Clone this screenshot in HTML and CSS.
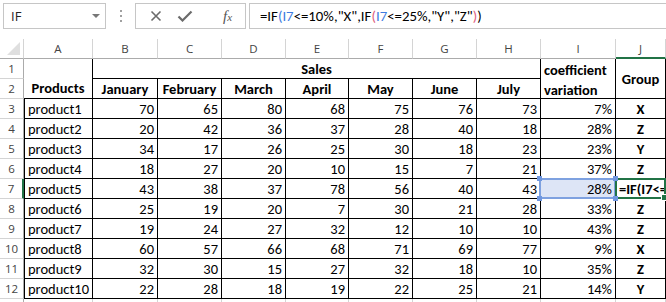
FILE: index.html
```html
<!DOCTYPE html>
<html lang="en">
<head>
<meta charset="UTF-8">
<meta name="viewport" content="width=device-width, initial-scale=1.0">
<title>Sales - coefficient variation</title>
<link rel="stylesheet" href="styles.css">
</head>
<body>

<!-- formula bar -->
<div class="topbar">
  <div class="namebox">
    <span>IF</span>
    <span class="caret"></span>
  </div>
  <div class="grip"><i></i><i></i><i></i></div>
  <div class="fbtns">
    <svg class="ico" width="12" height="12" viewBox="0 0 12 12"><path d="M1.5 1.5 L10.5 10.5 M10.5 1.5 L1.5 10.5" stroke="#6b6b6b" stroke-width="1.6" fill="none"/></svg>
    <svg class="ico" width="16" height="12" viewBox="0 0 16 12"><path d="M1.5 6.5 L5.5 10.5 L14.5 1.5" stroke="#6b6b6b" stroke-width="2.2" fill="none"/></svg>
    <span class="fx">f<small>x</small></span>
  </div>
  <div class="formula">=IF<span class="ref1">(I7</span>&lt;=10%,"X",IF<span class="par2">(</span><span class="ref1">I7</span>&lt;=25%,"Y","Z"<span class="par2">)</span>)</div>
</div>

<!-- sheet -->
<div class="sheet">
  <div class="corner"><span class="tri"></span></div>
  <div class="ch">A</div><div class="ch">B</div><div class="ch">C</div><div class="ch">D</div><div class="ch">E</div>
  <div class="ch">F</div><div class="ch">G</div><div class="ch">H</div><div class="ch">I</div><div class="ch cur">J</div>

  <div class="rh">1</div>
  <div class="c hd prod">Products</div>
  <div class="c hd sales">Sales</div>
  <div class="c hd coef">coefficient variation</div>
  <div class="c hd grp">Group</div>

  <div class="rh">2</div>
  <div class="c hd">January</div><div class="c hd">February</div><div class="c hd">March</div><div class="c hd">April</div>
  <div class="c hd">May</div><div class="c hd">June</div><div class="c hd">July</div>

  <div class="rh">3</div><div class="c t">product1</div><div class="c n">70</div><div class="c n">65</div><div class="c n">80</div><div class="c n">68</div><div class="c n">75</div><div class="c n">76</div><div class="c n">73</div><div class="c n">7%</div><div class="c g">X</div>
  <div class="rh">4</div><div class="c t">product2</div><div class="c n">20</div><div class="c n">42</div><div class="c n">36</div><div class="c n">37</div><div class="c n">28</div><div class="c n">40</div><div class="c n">18</div><div class="c n">28%</div><div class="c g">Z</div>
  <div class="rh">5</div><div class="c t">product3</div><div class="c n">34</div><div class="c n">17</div><div class="c n">26</div><div class="c n">25</div><div class="c n">30</div><div class="c n">18</div><div class="c n">23</div><div class="c n">23%</div><div class="c g">Y</div>
  <div class="rh">6</div><div class="c t">product4</div><div class="c n">18</div><div class="c n">27</div><div class="c n">20</div><div class="c n">10</div><div class="c n">15</div><div class="c n">7</div><div class="c n">21</div><div class="c n">37%</div><div class="c g">Z</div>
  <div class="rh cur">7</div><div class="c t">product5</div><div class="c n">43</div><div class="c n">38</div><div class="c n">37</div><div class="c n">78</div><div class="c n">56</div><div class="c n">40</div><div class="c n">43</div>
  <div class="c n picked">28%<i class="h tl"></i><i class="h tr"></i><i class="h bl"></i><i class="h br"></i></div>
  <div class="c edit"><span>=IF(I7&lt;=10%,"X",IF(I7&lt;=25%,"Y","Z"))</span><i class="fill"></i></div>
  <div class="rh">8</div><div class="c t">product6</div><div class="c n">25</div><div class="c n">19</div><div class="c n">20</div><div class="c n">7</div><div class="c n">30</div><div class="c n">21</div><div class="c n">28</div><div class="c n">33%</div><div class="c g">Z</div>
  <div class="rh">9</div><div class="c t">product7</div><div class="c n">19</div><div class="c n">24</div><div class="c n">27</div><div class="c n">32</div><div class="c n">12</div><div class="c n">10</div><div class="c n">10</div><div class="c n">43%</div><div class="c g">Z</div>
  <div class="rh">10</div><div class="c t">product8</div><div class="c n">60</div><div class="c n">57</div><div class="c n">66</div><div class="c n">68</div><div class="c n">71</div><div class="c n">69</div><div class="c n">77</div><div class="c n">9%</div><div class="c g">X</div>
  <div class="rh">11</div><div class="c t">product9</div><div class="c n">32</div><div class="c n">30</div><div class="c n">15</div><div class="c n">27</div><div class="c n">32</div><div class="c n">18</div><div class="c n">10</div><div class="c n">35%</div><div class="c g">Z</div>
  <div class="rh">12</div><div class="c t">product10</div><div class="c n">22</div><div class="c n">28</div><div class="c n">18</div><div class="c n">19</div><div class="c n">22</div><div class="c n">25</div><div class="c n">21</div><div class="c n">14%</div><div class="c g">Y</div>

  <!-- next row, only its grid lines show -->
  <div class="rh"></div>
  <div class="c e"></div><div class="c e"></div><div class="c e"></div><div class="c e"></div><div class="c e"></div>
  <div class="c e"></div><div class="c e"></div><div class="c e"></div><div class="c e"></div><div class="c e"></div>
</div>

</body>
</html>
```

FILE: styles.css
```css
body {
  margin: 0;
  background: #fff;
  font-family: "Carlito", "Lato", sans-serif;
  color: #000;
  overflow: hidden;
}

/* ---- formula bar ---- */
.topbar {
  height: 39px;
  display: flex;
  align-items: flex-start;
  padding: 3px 0 0 3px;
  box-sizing: border-box;
}

.namebox {
  width: 103px;
  height: 26px;
  box-sizing: border-box;
  border: 1px solid #c6c6c6;
  display: flex;
  align-items: center;
  justify-content: space-between;
  padding: 0 5px 0 7px;
  font-family: "Open Sans", sans-serif;
  font-size: 13px;
  color: #222;
}

.caret {
  width: 0;
  height: 0;
  border-left: 4px solid transparent;
  border-right: 4px solid transparent;
  border-top: 4px solid #777;
}

.grip {
  width: 29px;
  height: 26px;
  display: flex;
  flex-direction: column;
  align-items: center;
  justify-content: center;
  gap: 3px;
}

.grip i {
  width: 2px;
  height: 2px;
  background: #a0a0a0;
}

.fbtns {
  width: 111px;
  height: 26px;
  box-sizing: border-box;
  border: 1px solid #c6c6c6;
  display: flex;
  align-items: center;
  padding: 0 0 0 14px;
  gap: 15px;
}

.fx {
  margin-left: 15px;
  font-family: "Liberation Serif", serif;
  font-style: italic;
  font-size: 15px;
  color: #555;
}

.fx small {
  font-size: 11px;
}

.formula {
  flex: 1;
  margin-left: 3px;
  height: 26px;
  box-sizing: border-box;
  border: 1px solid #c6c6c6;
  border-right: none;
  padding: 0 0 0 10px;
  line-height: 24px;
  font-size: 14.8px;
  white-space: nowrap;
}

.ref1 { color: #3d7be0; }
.par2 { color: #e0607e; }

/* ---- sheet ---- */
.sheet {
  display: grid;
  grid-template-columns: 24px 69px 65px 64px 64px 63px 64px 64px 64px 75px 50px;
  grid-auto-rows: 20px;
  height: 263px;
  overflow: hidden;
  font-size: 14.5px;
}

.corner, .ch, .rh {
  font-family: "Open Sans", sans-serif;
  font-size: 11.5px;
  color: #444;
  box-sizing: border-box;
  border-bottom: 1px solid #ababab;
}

.corner {
  border-right: 1px solid #d4d4d4;
  position: relative;
}

.tri {
  position: absolute;
  right: 3px;
  bottom: 3px;
  width: 0;
  height: 0;
  border-left: 13px solid transparent;
  border-bottom: 13px solid #dfdfdf;
}

.ch {
  border-right: 1px solid #d4d4d4;
  text-align: center;
  line-height: 19px;
}

.ch.cur {
  border-bottom: 2px solid #217346;
}

.rh {
  border-bottom: 1px solid #d4d4d4;
  border-right: 1px solid #ababab;
  text-align: center;
  line-height: 19px;
}

.rh.cur {
  border-right: 2px solid #217346;
}

.c {
  box-sizing: border-box;
  border-right: 1px solid #000;
  border-bottom: 1px solid #000;
  padding: 0 3px;
  line-height: 20px;
  white-space: nowrap;
  overflow: hidden;
}

.c.t { border-left: 1px solid #000; }
.c.n { text-align: right; }
.c.g { text-align: center; font-weight: bold; }
.c.e { border-color: #d4d4d4; }

.hd {
  font-weight: bold;
  text-align: center;
}

.prod {
  grid-row: span 2;
  display: flex;
  align-items: flex-end;
  justify-content: center;
  line-height: 20px;
}

.sales { grid-column: span 7; }

.coef {
  grid-row: span 2;
  white-space: normal;
  text-align: left;
  line-height: 20px;
  padding-top: 1px;
}

.grp {
  grid-row: span 2;
  display: flex;
  align-items: center;
  justify-content: center;
}

/* referenced cell I7 */
.picked {
  position: relative;
  overflow: visible;
  background: #dde5f6;
}

.picked::after {
  content: "";
  position: absolute;
  left: -2px;
  top: -1px;
  right: -1px;
  bottom: -1px;
  border: 2px solid #7ea1e0;
}

.h {
  position: absolute;
  width: 5px;
  height: 5px;
  background: #6f97df;
  z-index: 1;
}

.h.tl { left: -4px; top: -3px; }
.h.tr { right: -3px; top: -3px; }
.h.bl { left: -4px; bottom: -3px; }
.h.br { right: -3px; bottom: -3px; }

/* active cell J7 in edit mode */
.edit {
  position: relative;
  overflow: visible;
  font-weight: bold;
  padding: 0;
}

.edit span {
  display: block;
  overflow: hidden;
  padding-left: 3px;
  height: 19px;
}

.edit::after {
  content: "";
  position: absolute;
  left: -1px;
  top: -1px;
  right: -1px;
  bottom: -1px;
  border: 2px solid #217346;
}

.fill {
  position: absolute;
  right: -3px;
  bottom: -3px;
  width: 5px;
  height: 5px;
  background: #217346;
  border: 1px solid #fff;
  z-index: 1;
}
```
